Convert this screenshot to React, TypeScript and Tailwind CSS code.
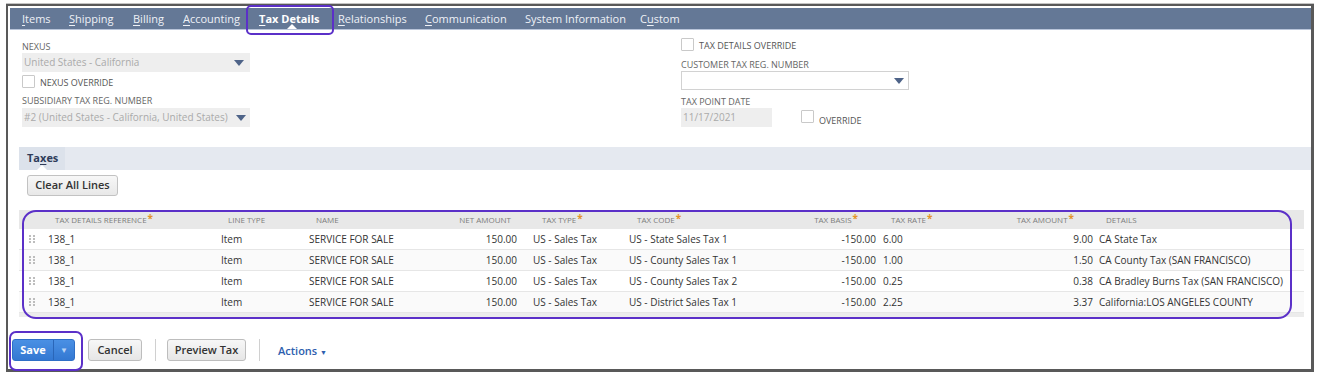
import React from "react";

const tabs = [
  { label: "Items", u: 0, w: 47 },
  { label: "Shipping", u: 0, w: 64 },
  { label: "Billing", u: 0, w: 50 },
  { label: "Accounting", u: 0, w: 76 },
  { label: "Tax Details", u: 0, w: 79, active: true },
  { label: "Relationships", u: 0, w: 87 },
  { label: "Communication", u: 0, w: 100 },
  { label: "System Information", u: -1, w: 115 },
  { label: "Custom", u: 1, w: 60 },
];

const rows = [
  { code: "US - State Sales Tax 1", rate: "6.00", amount: "9.00", details: "CA State Tax" },
  { code: "US - County Sales Tax 1", rate: "1.00", amount: "1.50", details: "CA County Tax (SAN FRANCISCO)" },
  { code: "US - County Sales Tax 2", rate: "0.25", amount: "0.38", details: "CA Bradley Burns Tax (SAN FRANCISCO)" },
  { code: "US - District Sales Tax 1", rate: "2.25", amount: "3.37", details: "California:LOS ANGELES COUNTY" },
];

function Underlined({ text, idx }: { text: string; idx: number }) {
  if (idx < 0) return <>{text}</>;
  return (
    <>
      {text.slice(0, idx)}
      <span className="underline underline-offset-2">{text[idx]}</span>
      {text.slice(idx + 1)}
    </>
  );
}

function Arrow() {
  return (
    <svg width="10" height="6" viewBox="0 0 10 6">
      <path d="M0 0 H10 L5 6 Z" fill="#4e6388" />
    </svg>
  );
}

function Star() {
  return <span className="ml-[1px] align-top text-[10px] font-bold leading-[8px] text-[#e3942b]">*</span>;
}

function Checkbox({ className = "" }: { className?: string }) {
  return <div className={"w-[13px] h-[13px] shrink-0 border border-[#c9c9c9] bg-white rounded-[1px] " + className} />;
}

function Handle() {
  return (
    <svg width="6" height="9" viewBox="0 0 6 9">
      {[0, 3, 6].map((y) =>
        [0, 4].map((x) => <rect key={x + "-" + y} x={x} y={y} width="2" height="2" fill="#bdbdbd" />)
      )}
    </svg>
  );
}

export default function App() {
  return (
    <div className="relative w-[1324px] h-[380px] overflow-hidden bg-white font-['Open_Sans',sans-serif]">
      <div className="ml-[6px] mt-[4px] w-[1308px] h-[368px] border-l-2 border-t-2 border-r-[3px] border-b-[3px] border-[#595959] shadow-[0_-1px_0_#c4c4c4] flex flex-col">
        {/* subtabs */}
        <div className="ml-[2px] mt-[2px] h-[22px] bg-[#647896] border-b border-[#b9c5da] flex items-center pl-[12px] pt-[2px] text-[11px] text-[#eef1f6]">
          {tabs.map((t) => (
            <div key={t.label} className="relative h-full flex items-center shrink-0" style={{ width: t.w }}>
              <span className={t.active ? "font-bold text-white" : ""}>
                <Underlined text={t.label} idx={t.u} />
              </span>
              {t.active && (
                <div className="absolute bottom-0 left-[28px] w-0 h-0 border-l-[5px] border-r-[5px] border-b-[5px] border-l-transparent border-r-transparent border-b-white" />
              )}
            </div>
          ))}
        </div>

        {/* header fields */}
        <div className="flex pl-[14px]">
          <div className="w-[659px] flex flex-col">
            <div className="mt-[11px] text-[9px] leading-[12px] text-[#666]">NEXUS</div>
            <div className="w-[228px] h-[19px] bg-[#eeeeee] flex items-center justify-between pl-[2px] pr-[6px] text-[10px] text-[#aaaaaa]">
              <span>United States - California</span>
              <Arrow />
            </div>
            <div className="mt-[2px] h-[14px] flex items-end">
              <Checkbox />
              <span className="ml-[5px] text-[9px] leading-[10px] text-[#555]">NEXUS OVERRIDE</span>
            </div>
            <div className="mt-[7px] text-[9px] leading-[12px] text-[#666]">SUBSIDIARY TAX REG. NUMBER</div>
            <div className="mt-[1px] w-[228px] h-[19px] bg-[#eeeeee] flex items-center justify-between pl-[2px] pr-[4px] text-[10px] text-[#aaaaaa]">
              <span>#2 (United States - California, United States)</span>
              <Arrow />
            </div>
          </div>
          <div className="flex flex-col">
            <div className="mt-[8px] h-[13px] flex items-end">
              <Checkbox />
              <span className="ml-[5px] text-[9px] leading-[10px] text-[#555]">TAX DETAILS OVERRIDE</span>
            </div>
            <div className="mt-[8px] text-[9px] leading-[12px] text-[#666]">CUSTOMER TAX REG. NUMBER</div>
            <div className="w-[228px] h-[19px] bg-white border border-[#d2d2d2] flex items-center justify-end pr-[4px]">
              <Arrow />
            </div>
            <div className="mt-[6px] text-[9px] leading-[12px] text-[#666]">TAX POINT DATE</div>
            <div className="flex items-end">
              <div className="w-[91px] h-[19px] bg-[#eeeeee] flex items-center pl-[2px] text-[10px] text-[#aaaaaa]">11/17/2021</div>
              <Checkbox className="ml-[29px] mb-[4px]" />
              <span className="ml-[5px] mb-[1px] text-[9px] leading-[10px] text-[#555]">OVERRIDE</span>
            </div>
          </div>
        </div>

        {/* Taxes sublist */}
        <div className="mt-[20px] ml-[11px] h-[23px] bg-[#e5e9f0] flex">
          <div className="relative w-[46px] h-full bg-[#dce2eb] flex items-center pl-[8px] text-[11px] font-bold text-[#2f3c5a]">
            <span>
              Ta<span className="underline underline-offset-2">x</span>es
            </span>
            <div className="absolute bottom-0 left-[18px] w-0 h-0 border-l-[5px] border-r-[5px] border-b-[5px] border-l-transparent border-r-transparent border-b-white" />
          </div>
        </div>
        <div className="mt-[5px] ml-[19px] w-[91px] h-[21px] flex items-center justify-center rounded-[3px] border border-[#c2c2c2] bg-gradient-to-b from-[#f7f7f7] to-[#e8e8e8] text-[11px] font-semibold text-[#333]">
          Clear All Lines
        </div>

        <div className="relative mt-[14px] ml-[11px] mr-[7px]">
          <div className="h-[19px] bg-[#e8e8e8] flex items-center text-[8px] text-[#7d7d7d]">
            <div className="w-[29px] shrink-0" />
            <div className="w-[173px] shrink-0 pl-[7px]">TAX DETAILS REFERENCE<Star /></div>
            <div className="w-[88px] shrink-0 pl-[7px]">LINE TYPE</div>
            <div className="w-[131px] shrink-0 pl-[7px]">NAME</div>
            <div className="w-[77px] shrink-0 pr-[6px] text-right">NET AMOUNT</div>
            <div className="w-[112px] shrink-0 pl-[25px]">TAX TYPE<Star /></div>
            <div className="w-[171px] shrink-0 pl-[8px]">TAX CODE<Star /></div>
            <div className="w-[76px] shrink-0 pr-[18px] text-right">TAX BASIS<Star /></div>
            <div className="w-[124px] shrink-0 pl-[15px]">TAX RATE<Star /></div>
            <div className="w-[93px] shrink-0 pr-[19px] text-right">TAX AMOUNT<Star /></div>
            <div className="pl-[13px]">DETAILS</div>
          </div>
          {rows.map((r, i) => (
            <div key={i} className={"h-[21px] flex items-center border-b border-[#e6e6e6] text-[10px] text-[#333] " + (i % 2 ? "bg-[#fafafa]" : "bg-white")}>
              <div className="w-[29px] shrink-0 pl-[10px] flex items-center"><Handle /></div>
              <div className="w-[173px] shrink-0">138_1</div>
              <div className="w-[88px] shrink-0">Item</div>
              <div className="w-[131px] shrink-0">SERVICE FOR SALE</div>
              <div className="w-[77px] shrink-0 text-right">150.00</div>
              <div className="w-[112px] shrink-0 pl-[16px]">US - Sales Tax</div>
              <div className="w-[171px] shrink-0">{r.code}</div>
              <div className="w-[76px] shrink-0 text-right">-150.00</div>
              <div className="w-[124px] shrink-0 pl-[7px]">{r.rate}</div>
              <div className="w-[93px] shrink-0 text-right">{r.amount}</div>
              <div className="pl-[6px]">{r.details}</div>
            </div>
          ))}
          <div className="h-[4px] bg-[#ececec]" />
          <div className="absolute left-[3px] top-0 w-[1270px] h-[109px] rounded-[14px] border-2 border-[#5b30c8]" />
        </div>

        {/* buttons */}
        <div className="mt-[22px] ml-[4px] flex items-center">
          <div className="w-[63px] h-[22px] flex rounded-[3px] overflow-hidden bg-gradient-to-b from-[#4a90e4] to-[#3378d2] border border-[#2f6fc6]">
            <div className="w-[41px] flex items-center justify-center text-[11px] font-bold text-white border-r border-[#2a66b8]">Save</div>
            <div className="flex-1 flex items-center justify-center text-[8px] text-[#b9d4f5]">▼</div>
          </div>
          <div className="ml-[13px] w-[54px] h-[22px] flex items-center justify-center rounded-[3px] border border-[#bdbdbd] bg-gradient-to-b from-[#f7f7f7] to-[#e6e6e6] text-[11px] font-semibold text-[#333]">Cancel</div>
          <div className="ml-[13px] w-px h-[22px] bg-[#d0d0d0]" />
          <div className="ml-[11px] w-[79px] h-[22px] flex items-center justify-center rounded-[3px] border border-[#bdbdbd] bg-gradient-to-b from-[#f7f7f7] to-[#e6e6e6] text-[11px] font-semibold text-[#333]">Preview Tax</div>
          <div className="ml-[13px] w-px h-[22px] bg-[#d0d0d0]" />
          <div className="ml-[18px] mt-[2px] text-[11px] font-semibold text-[#2e5eae]">
            Actions <span className="text-[7px]">▼</span>
          </div>
        </div>
      </div>

      <div className="absolute left-[246px] top-[5px] w-[88px] h-[30px] rounded-[5px] border-2 border-[#5b30c8]" />
      <div className="absolute left-[9px] top-[331px] w-[74px] h-[40px] rounded-[7px] border-2 border-[#5b30c8]" />
    </div>
  );
}
